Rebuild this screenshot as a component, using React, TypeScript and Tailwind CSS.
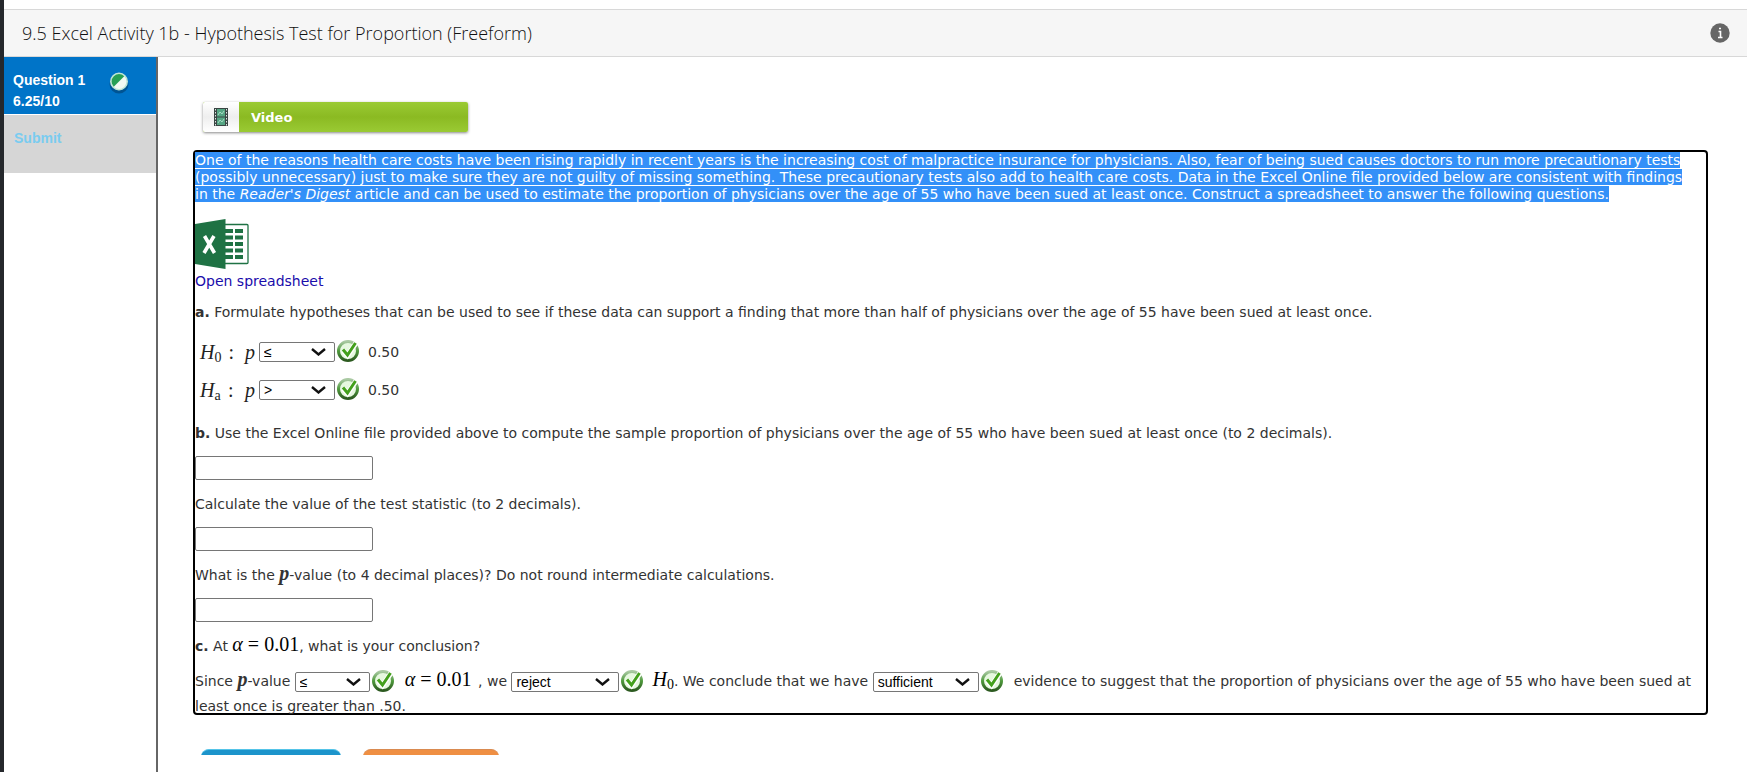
import React from 'react';

type SelectProps = {
  label: string;
  options: string[];
  initial: string;
  width: string;
};

const textFont = "font-['Verdana','DejaVu_Sans',sans-serif]";
const mathFont = "font-['Liberation_Serif',serif]";

const AnswerSelect = ({ label, options, initial, width }: SelectProps) => {
  const [value, setValue] = React.useState(initial);

  return (
    <span className={`relative inline-flex h-5 align-middle ${width}`}>
      <select
        aria-label={label}
        value={value}
        onChange={(e) => setValue(e.target.value)}
        className="h-5 w-full appearance-none rounded-xs border border-[#767676] bg-white pl-1 font-['Liberation_Sans',sans-serif] text-sm leading-4 text-black"
      >
        {options.map((o) => (
          <option key={o} value={o}>{o}</option>
        ))}
      </select>
      <svg className="pointer-events-none absolute top-1.5 right-2 h-2 w-4" viewBox="0 0 16 8" fill="none" stroke="#111" strokeWidth="2.4">
        <path d="M1 1l6.500 5.500L14 1" />
      </svg>
    </span>
  );
};

const Correct = () => (
  <svg className="ml-px inline-block h-6 w-6 pb-0.5 align-middle" viewBox="1 1 22 22" role="img" aria-label="Correct">
    <defs>
      <linearGradient id="ring" x1="0" y1="0" x2="0" y2="1">
        <stop offset="0" stopColor="#a9c9a2" />
        <stop offset="0.5" stopColor="#4f9a3d" />
        <stop offset="1" stopColor="#2c5a20" />
      </linearGradient>
    </defs>
    <circle cx="12" cy="12" r="9.5" fill="#e6f8df" stroke="url(#ring)" strokeWidth="3" />
    <path d="M7 11.5l4.500 5L20 4" fill="none" stroke="#fff" strokeWidth="5" />
    <path d="M7 10.5l4.500 5.500L19.500 4" fill="none" stroke="#43a01c" strokeWidth="3" />
  </svg>
);

const ExcelIcon = () => (
  <svg className="block h-[50px] w-[54px]" viewBox="0 0 54 50" aria-hidden="true">
    <rect x="22" y="5.5" width="31" height="39" rx="1" fill="#fff" stroke="#1f7244" strokeWidth="1.3" />
    {[10, 16.5, 23, 29.5, 36].map((y) => (
      <g key={y} fill="#1f7244">
        <rect x="30" y={y} width="8" height="4" />
        <rect x="40" y={y} width="8" height="4" />
      </g>
    ))}
    <path d="M0 5L30.500 0v50L0 45z" fill="#1f7244" />
    <path d="M9.500 17l10 17M19 17L9 34" stroke="#fff" strokeWidth="3.600" />
  </svg>
);

const FilmIcon = () => (
  <svg className="h-[18px] w-[14px]" viewBox="0 0 14 18" aria-hidden="true">
    <rect width="14" height="18" fill="#3a4644" />
    <rect x="3" y="1" width="8" height="7.500" fill="#55a583" />
    <rect x="3" y="9.500" width="8" height="7.500" fill="#55a583" />
    <path d="M4 7l2-3 2 2 2-3M4 15l2-3 2 2 2-3" fill="none" stroke="#a5dcc3" />
    <path d="M1.500 1v17M12.500 1v17" stroke="#dfe5e3" strokeDasharray="1.500 1.500" />
  </svg>
);

const PartialIcon = () => (
  <svg className="h-6 w-6" viewBox="0 0 24 24" role="img" aria-label="Partially correct">
    <circle cx="12" cy="14" r="9.500" fill="#00406f" opacity="0.6" />
    <circle cx="12" cy="11.500" r="8.200" fill="#f3faf3" stroke="#bfe6d6" strokeWidth="1.600" />
    <path d="M6.200 17.300A8.200 8.200 0 0 1 17.800 5.700z" transform="translate(1.200 1.150) scale(0.9)" fill="#27a055" />
  </svg>
);

const Sidebar = () => (
  <nav className="w-[154px] shrink-0 border-r-2 border-[#666] font-['Liberation_Sans',sans-serif] text-sm font-bold">
    <a href="#question-1" className="flex h-[57px] justify-between bg-[#0074c8] pt-[13px] pr-[25px] pl-[9px] leading-[21px] text-white">
      <span>Question 1<br />6.25/10</span>
      <PartialIcon />
    </a>
    <a href="#submit" className="mt-px block h-[58px] bg-[#d6d6d6] pt-3 pl-[10px] leading-[22px] text-[#7accf0]">
      Submit
    </a>
  </nav>
);

const H = ({ sub }: { sub: string }) => (
  <>
    <i>H</i>
    <sub className="bottom-0 align-[-3px] text-sm leading-0">{sub}</sub>
  </>
);

const Hypothesis = ({ sub, initial }: { sub: string; initial: string }) => (
  <div className="flex h-[38px] items-center pl-[5px] text-[#333]">
    <span className={`flex w-[59px] items-baseline justify-between pr-1 text-xl text-[#222] ${mathFont}`}>
      <span><H sub={sub} /></span>
      <span>:</span>
      <i className="pl-1">p</i>
    </span>
    <AnswerSelect label={`Sign for H${sub}`} options={['≤', '<', '≥', '>', '=', '≠']} initial={initial} width="w-[76px]" />
    <Correct />
    <span className="ml-2">0.50</span>
  </div>
);

const NumberField = ({ id, children }: { id: string; children: React.ReactNode }) => (
  <div>
    <label htmlFor={id} className="block">{children}</label>
    <input id={id} type="text" className="mt-[14px] block h-6 w-[178px] rounded-xs border border-[#767676] bg-white px-1" />
  </div>
);

export default function App() {
  return (
    <div className={`min-h-screen border-l-4 border-[#25282c] bg-white text-sm leading-[17px] text-[#333] ${textFont}`}>
      <header className="border-t-[9px] border-white">
        <div className="flex h-12 items-center justify-between border-y border-[#d8d8d8] bg-[#f6f6f6] pr-[17px] pl-[18px]">
          <h1 className="font-['Open_Sans',sans-serif] text-lg font-light text-[#111]">
            9.5 Excel Activity 1b - Hypothesis Test for Proportion (Freeform)
          </h1>
          <button type="button" aria-label="Information">
            <svg className="h-5 w-5" viewBox="0 0 20 20">
              <circle cx="10" cy="10" r="9.700" fill="#666" />
              <path d="M8.500 8.500h2v5.500M8 14.500h4.500M9 5.500h2" fill="none" stroke="#fff" strokeWidth="1.600" />
            </svg>
          </button>
        </div>
      </header>

      <div className="flex min-h-[715px]">
        <Sidebar />
        <main className="min-w-0 flex-1 pt-[45px] pr-[39px] pl-[35px]">
          <button type="button" className="ml-[10px] flex h-[30px] w-[265px] items-stretch rounded-xs bg-linear-to-b from-[#9aca33] via-[#8bba22] to-[#9aca33] text-left text-[13px] font-bold text-white shadow-[0_1px_3px_#888]">
            <span className="flex w-9 items-center justify-center rounded-l-xs bg-linear-to-b from-white via-[#eee] to-white">
              <FilmIcon />
            </span>
            <span className="self-center pl-3">Video</span>
          </button>

          <section className="mt-[18px] rounded border-2 border-black">
            <p className="pr-3">
              <span className="bg-[#3390f8] text-white">
                One of the reasons health care costs have been rising rapidly in recent years is the increasing cost of malpractice insurance for physicians. Also, fear of being sued causes doctors to run more precautionary tests (possibly unnecessary) just to make sure they are not guilty of missing something. These precautionary tests also add to health care costs. Data in the Excel Online file provided below are consistent with findings in the <i>Reader's Digest</i> article and can be used to estimate the proportion of physicians over the age of 55 who have been sued at least once. Construct a spreadsheet to answer the following questions.
              </span>
            </p>

            <a href="#spreadsheet" className="mt-4 block w-fit text-[#1a0dab]">
              <ExcelIcon />
              <span className="mt-1 block">Open spreadsheet</span>
            </a>

            <p className="mt-[14px]">
              <b>a.</b> Formulate hypotheses that can be used to see if these data can support a finding that more than half of physicians over the age of 55 have been sued at least once.
            </p>

            <div className="mt-3">
              <Hypothesis sub="0" initial="≤" />
              <Hypothesis sub="a" initial=">" />
            </div>

            <div className="mt-4 space-y-4">
              <NumberField id="proportion">
                <b>b.</b> Use the Excel Online file provided above to compute the sample proportion of physicians over the age of 55 who have been sued at least once (to 2 decimals).
              </NumberField>
              <NumberField id="statistic">Calculate the value of the test statistic (to 2 decimals).</NumberField>
              <NumberField id="p-value">
                What is the <b className={`text-xl leading-0 italic ${mathFont}`}>p</b>-value (to 4 decimal places)? Do not round intermediate calculations.
              </NumberField>
            </div>

            <p className="mt-4">
              <b>c.</b> At <span className={`text-xl leading-0 text-black ${mathFont}`}><i>α</i> = 0.01</span>, what is your conclusion?
            </p>
            <p className="-mb-[5px] mt-[14px] leading-6">
              Since <b className={`text-xl leading-0 italic ${mathFont}`}>p</b>-value{' '}
              <AnswerSelect label="p-value comparison" options={['≤', '<', '≥', '>', '=']} initial="≤" width="w-[75px]" />
              <Correct />
              <span className={`mr-0.5 ml-2.5 text-xl leading-0 text-black ${mathFont}`}><i>α</i> = 0.01</span> , we{' '}
              <AnswerSelect label="Decision" options={['reject', 'do not reject']} initial="reject" width="w-[108px]" />
              <Correct />
              <span className={`ml-2 text-xl leading-0 text-black ${mathFont}`}><H sub="0" /></span>. We conclude that we have{' '}
              <AnswerSelect label="Evidence" options={['sufficient', 'insufficient']} initial="sufficient" width="w-[106px]" />
              <Correct />
              <span className="ml-2.5">evidence to suggest that the proportion of physicians over the age of 55 who have been sued at least once is greater than .50.</span>
            </p>
          </section>

          <div className="mt-[34px] ml-2 flex h-1.5 items-start gap-[22px] overflow-hidden">
            <button type="button" aria-label="Check answer" className="h-8 w-[140px] shrink-0 rounded-lg border-t border-[#55c4e8] bg-[#1c94cb]" />
            <button type="button" aria-label="Reset" className="h-8 w-[136px] shrink-0 rounded-lg border-t border-[#d98a50] bg-[#ef8f43]" />
          </div>
        </main>
      </div>
    </div>
  );
}
